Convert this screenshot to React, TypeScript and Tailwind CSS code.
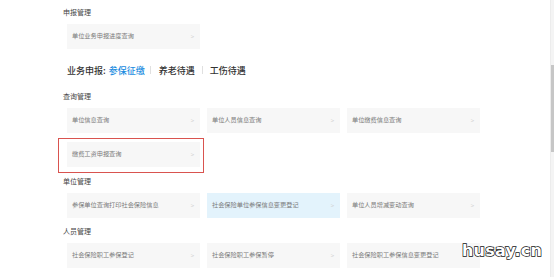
import React from "react";

type Item = { label: string; active?: boolean; marked?: boolean };

const font = { fontFamily: '"Noto Sans CJK SC", "Noto Sans", sans-serif' };

function Card({ item }: { item: Item }) {
  return (
    <div className="relative">
      <div
        className={`flex h-[25px] items-center justify-between pl-[5px] pr-[6px] ${
          item.active ? "bg-[#e3f3fc]" : "bg-[#f7f7f7]"
        }`}
      >
        <span className="text-[6.2px] leading-none text-[#7a7a7a]">{item.label}</span>
        <span className="text-[6px] leading-none text-[#d0d0d0]">&gt;</span>
      </div>
      {item.marked && (
        <div className="pointer-events-none absolute left-[-9px] top-[-4px] h-[35px] w-[146px] border border-[#d9534f]" />
      )}
    </div>
  );
}

function Section({ title, items, top }: { title: string; items: Item[]; top: string }) {
  return (
    <div className={top}>
      <div className="h-[10px] text-[7px] leading-[10px] text-[#444]">{title}</div>
      <div className="mt-[7px] grid grid-cols-[133px_133px_133px] gap-x-[7px] gap-y-[9px] pl-[4px]">
        {items.map((it) => (
          <Card key={it.label} item={it} />
        ))}
      </div>
    </div>
  );
}

export default function App() {
  return (
    <div className="relative flex h-[277px] w-[554px] overflow-hidden bg-white" style={font}>
      <div className="flex-1 pl-[63px] pt-[7px]">
        <Section title="申报管理" top="" items={[{ label: "单位业务申报进度查询" }]} />

        <div className="mt-[15px] flex h-[12px] items-center pl-[4px] text-[9px] font-medium leading-none text-[#333]">
          <span>业务申报:</span>
          <span className="ml-[3px] text-[#1a8ce0]">参保征缴</span>
          <span className="mx-[5px] h-[8px] w-px bg-[#e0e0e0]" />
          <span className="ml-[3px]">养老待遇</span>
          <span className="mx-[7px] h-[8px] w-px bg-[#e0e0e0]" />
          <span>工伤待遇</span>
        </div>

        <Section
          title="查询管理"
          top="mt-[15px]"
          items={[
            { label: "单位信息查询" },
            { label: "单位人员信息查询" },
            { label: "单位缴费信息查询" },
            { label: "缴费工资申报查询", marked: true },
          ]}
        />
        <Section
          title="单位管理"
          top="mt-[9px]"
          items={[
            { label: "参保单位查询打印社会保险信息" },
            { label: "社会保险单位参保信息变更登记", active: true },
            { label: "单位人员增减变动查询" },
          ]}
        />
        <Section
          title="人员管理"
          top="mt-[8px]"
          items={[
            { label: "社会保险职工参保登记" },
            { label: "社会保险职工参保暂停" },
            { label: "社会保险职工参保信息变更登记" },
          ]}
        />
      </div>

      <div className="flex w-[4px] flex-col border-l border-[#ececec] bg-[#f4f4f4] pt-[65px]">
        <div className="h-[87px] w-full bg-[#c6c6c6]" />
      </div>

      <div
        className="pointer-events-none absolute left-[462px] top-[243px] text-[16px] font-bold leading-none tracking-[0.2px] text-white"
        style={{
          fontFamily: '"DejaVu Sans", sans-serif',
          WebkitTextStroke: "1.4px #111",
          paintOrder: "stroke fill",
        }}
      >
        husay.cn
      </div>
    </div>
  );
}
